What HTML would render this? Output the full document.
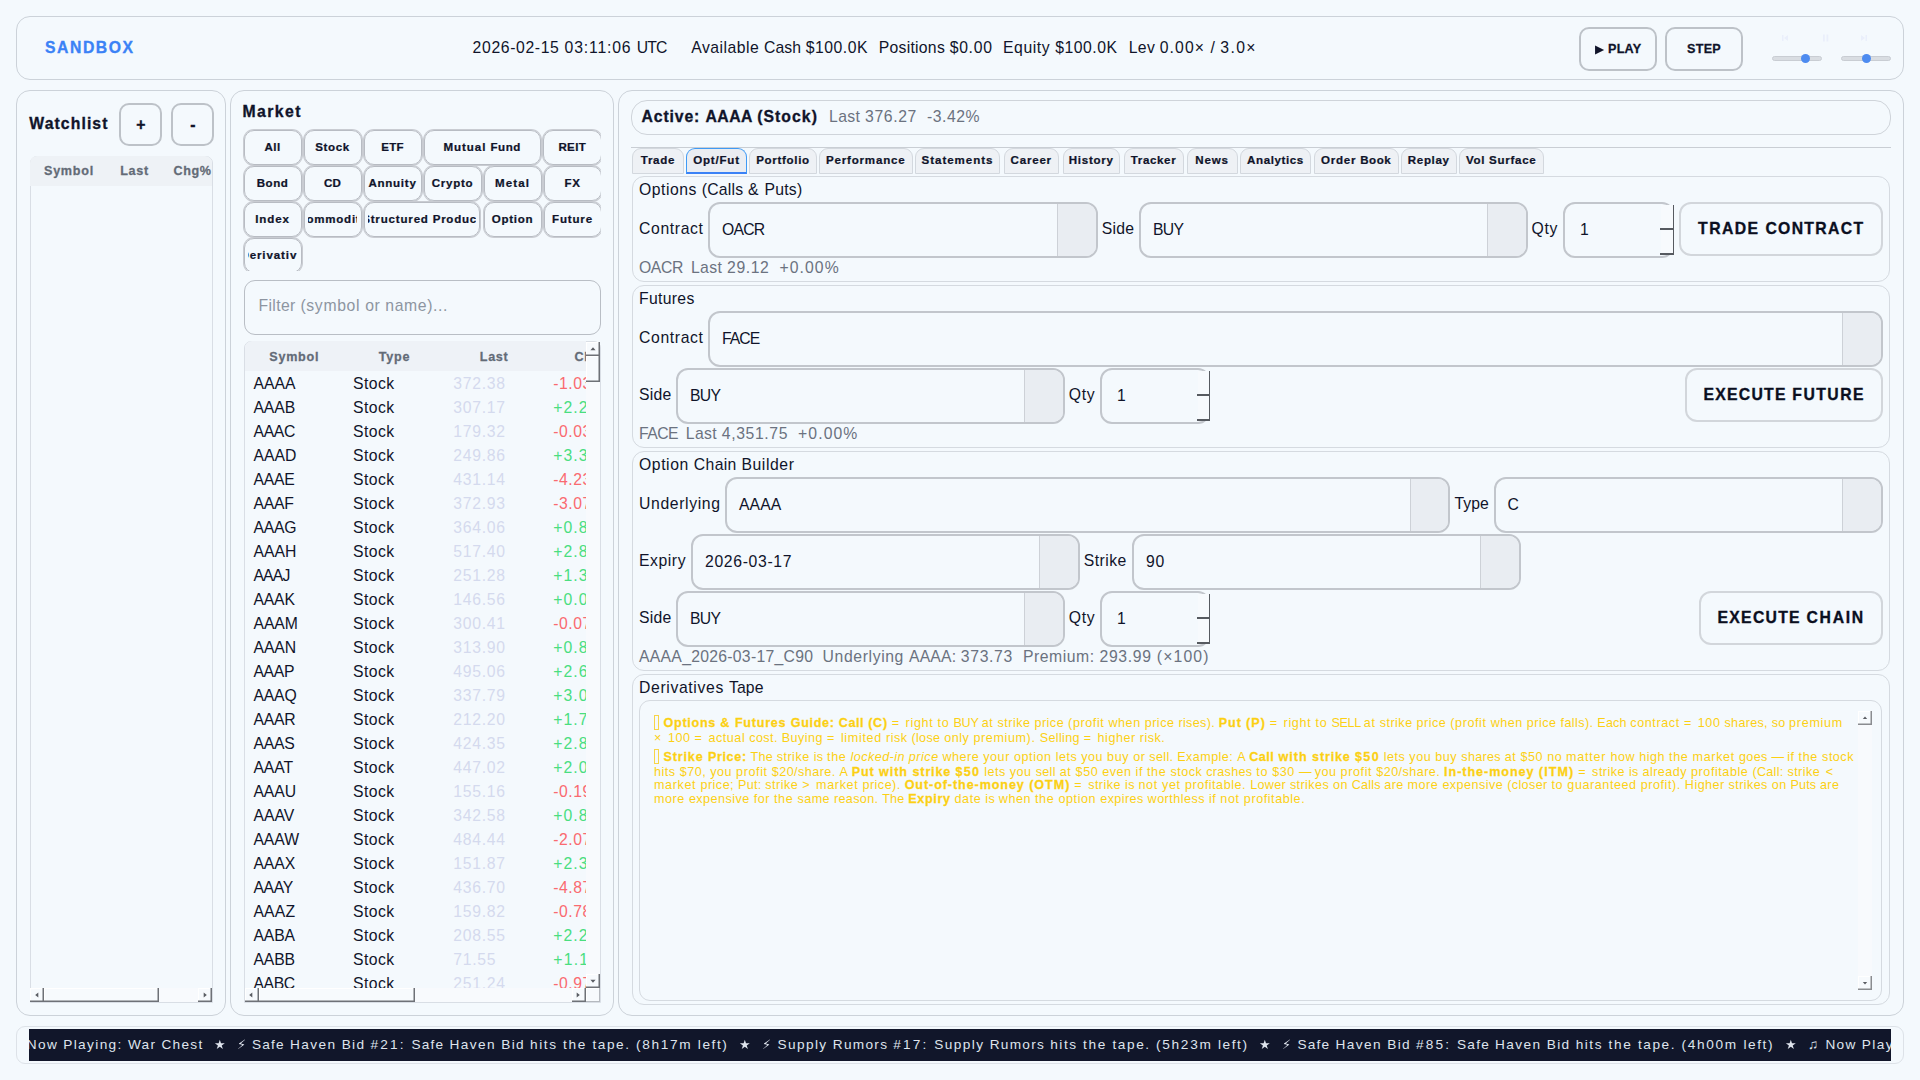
<!DOCTYPE html>
<html><head><meta charset="utf-8"><title>Sandbox</title><style>
html,body{margin:0;padding:0}
body{width:1920px;height:1080px;overflow:hidden;background:#f4f9fd;position:relative;font-family:"Liberation Sans",sans-serif;color:#10142a}
.b{position:absolute;box-sizing:border-box}
.t{position:absolute;white-space:pre;font-size:15px}
</style></head><body>
<div class="b" style="left:16px;top:16px;width:1888px;height:64px;border:1px solid #ccd2d9;border-radius:14px;"></div>
<div class="b" style="left:16px;top:90px;width:210px;height:926px;border:1px solid #ccd2d9;border-radius:14px;"></div>
<div class="b" style="left:230px;top:90px;width:384px;height:926px;border:1px solid #ccd2d9;border-radius:14px;"></div>
<div class="b" style="left:618px;top:90px;width:1286px;height:926px;border:1px solid #ccd2d9;border-radius:14px;"></div>
<div class="b" style="left:16px;top:1026px;width:1888px;height:38px;border:1px solid #dde2e8;border-radius:9px;"></div>
<div class="b" style="left:29px;top:1029px;width:1862px;height:32px;background:#11162a;"></div>
<div class="t" style="left:45px;top:38.3px;line-height:20px;color:#3b82f6;"><span style="font-size:15.75px;font-weight:700;-webkit-text-stroke:0.33px;"><span style="letter-spacing:1.553px">SANDBOX</span></span></div>
<div class="t" style="left:472.6px;top:38.3px;line-height:20px;color:#10142a;"><span style="font-size:15.75px;"><span style="letter-spacing:0.636px">2026-02-15 </span><span style="letter-spacing:0.847px">03:11:06 </span><span style="letter-spacing:-0.878px">UTC</span></span></div>
<div class="t" style="left:691.3px;top:38.3px;line-height:20px;color:#10142a;"><span style="font-size:15.75px;"><span style="letter-spacing:0.466px">Available </span><span style="letter-spacing:0.122px">Cash </span><span style="letter-spacing:0.521px">$100.0K</span></span></div>
<div class="t" style="left:878.7px;top:38.3px;line-height:20px;color:#10142a;"><span style="font-size:15.75px;"><span style="letter-spacing:0.27px">Positions </span><span style="letter-spacing:0.706px">$0.00</span></span></div>
<div class="t" style="left:1003px;top:38.3px;line-height:20px;color:#10142a;"><span style="font-size:15.75px;"><span style="letter-spacing:0.579px">Equity </span><span style="letter-spacing:0.521px">$100.0K</span></span></div>
<div class="t" style="left:1128.8px;top:38.3px;line-height:20px;color:#10142a;"><span style="font-size:15.75px;"><span style="letter-spacing:0.299px">Lev </span><span style="letter-spacing:1.085px">0.00× </span><span style="letter-spacing:0.535px">/ </span><span style="letter-spacing:1.333px">3.0×</span></span></div>
<div class="b" style="left:1579px;top:27px;width:78px;height:43.5px;border:2px solid #bdc2c8;border-radius:10px;"></div>
<div class="t" style="left:1594.66px;top:38.2px;line-height:20px;color:#10142a;"><svg style="display:inline-block;vertical-align:baseline;overflow:visible;margin-right:0px" width="9.23" height="11.13" viewBox="0 -1900 1575 1900"><path fill="currentColor" transform="scale(1,-1)" d="M6 -252V1316L1569 532Z"/></svg><span style="font-size:12.6px;font-weight:700;-webkit-text-stroke:0.26px;"><span style="letter-spacing:0.677px"> </span><span style="letter-spacing:0.205px">PLAY</span></span></div>
<div class="b" style="left:1665px;top:27px;width:78px;height:43.5px;border:2px solid #bdc2c8;border-radius:10px;"></div>
<div class="t" style="left:1687.09px;top:38.2px;line-height:20px;color:#10142a;"><span style="font-size:12.6px;font-weight:700;-webkit-text-stroke:0.26px;"><span style="letter-spacing:0.228px">STEP</span></span></div>
<div class="b" style="left:1772px;top:56px;width:50px;height:5px;border:1px solid #c9cdd3;border-radius:2.5px;background:#d9dde2;"></div>
<div class="b" style="left:1800.5px;top:53.8px;width:9.4px;height:9.4px;border-radius:50%;background:#4d8bf0;"></div>
<div class="b" style="left:1841px;top:56px;width:50px;height:5px;border:1px solid #c9cdd3;border-radius:2.5px;background:#d9dde2;"></div>
<div class="b" style="left:1861.5px;top:53.8px;width:9.4px;height:9.4px;border-radius:50%;background:#4d8bf0;"></div>
<svg class="b" style="left:1775px;top:30px" width="100" height="16"><g fill="#eaeffb"><rect x="7" y="5" width="1.5" height="6"/><polygon points="13,5 13,11 9,8"/><rect x="48" y="4.5" width="1.8" height="7"/><rect x="51.5" y="4.5" width="1.8" height="7"/><polygon points="86,5 86,11 90,8"/><rect x="90.5" y="5" width="1.5" height="6"/></g></svg>
<div class="t" style="left:29.3px;top:114.3px;line-height:20px;color:#10142a;"><span style="font-size:15.75px;font-weight:700;-webkit-text-stroke:0.33px;"><span style="letter-spacing:1.093px">Watchlist</span></span></div>
<div class="b" style="left:118.8px;top:102.8px;width:43.7px;height:43.7px;border:2px solid #bdc2c8;border-radius:10px;"></div>
<div class="t" style="left:134.67px;top:114.5px;line-height:20px;color:#10142a;"><span style="font-size:15.75px;font-weight:700;-webkit-text-stroke:0.33px;"><span style="margin:0 1.685px">+</span></span></div>
<div class="b" style="left:170.8px;top:102.8px;width:43.7px;height:43.7px;border:2px solid #bdc2c8;border-radius:10px;"></div>
<div class="t" style="left:189.84px;top:114.7px;line-height:20px;color:#10142a;"><span style="font-size:15.75px;font-weight:700;-webkit-text-stroke:0.33px;"><span style="margin:0 0.49px">-</span></span></div>
<div class="b" style="left:29.5px;top:155.5px;width:183px;height:847px;border:1px solid #d9dee5;border-radius:7px 7px 0 0;"></div>
<div class="b" style="left:30px;top:156px;width:182px;height:29.5px;border-radius:7px 7px 0 0;background:#eef2f6;"></div>
<div class="t" style="left:44px;top:159.5px;line-height:20px;color:#636b77;"><span style="font-size:12.6px;font-weight:700;-webkit-text-stroke:0.26px;"><span style="letter-spacing:0.735px">Symbol</span></span></div>
<div class="t" style="left:120.2px;top:159.5px;line-height:20px;color:#636b77;"><span style="font-size:12.6px;font-weight:700;-webkit-text-stroke:0.26px;"><span style="letter-spacing:0.679px">Last</span></span></div>
<div class="b" style="left:170px;top:160px;width:42px;height:22px;overflow:hidden;"><div class="b" style="left:-170px;top:-160px;width:1920px;height:1080px;">
<div class="t" style="left:173.5px;top:159.5px;line-height:20px;color:#636b77;"><span style="font-size:12.6px;font-weight:700;-webkit-text-stroke:0.26px;"><span style="letter-spacing:0.567px">Chg%</span></span></div>
</div></div>
<div class="b" style="left:30px;top:988px;width:182px;height:14px;background:#f8fafd;"></div>
<div class="b" style="left:30px;top:988px;width:14px;height:14px;background:#f7fafd;box-shadow:inset -1.5px -1.5px 0 #6e7177, inset 1px 1px 0 #ffffff;"></div>
<svg class="b" style="left:30.5px;top:988.5px" width="12" height="12"><polygon points="7.3,3.4 7.3,8.6 4.2,6" fill="#5a5d63"/></svg>
<div class="b" style="left:44px;top:988px;width:115px;height:14px;background:#f7fafd;box-shadow:inset -1.5px -1.5px 0 #6e7177, inset 1px 1px 0 #ffffff;"></div>
<div class="b" style="left:198px;top:988px;width:14px;height:14px;background:#f7fafd;box-shadow:inset -1.5px -1.5px 0 #6e7177, inset 1px 1px 0 #ffffff;"></div>
<svg class="b" style="left:198.5px;top:988.5px" width="12" height="12"><polygon points="4.7,3.4 4.7,8.6 7.8,6" fill="#5a5d63"/></svg>
<div class="t" style="left:242.5px;top:102px;line-height:20px;color:#10142a;"><span style="font-size:15.75px;font-weight:700;-webkit-text-stroke:0.33px;"><span style="letter-spacing:1.432px">Market</span></span></div>
<div class="b" style="left:240px;top:126px;width:361px;height:144.5px;overflow:hidden;"><div class="b" style="left:-240px;top:-126px;width:1920px;height:1080px;">
<div class="b" style="left:243.5px;top:129.5px;width:58px;height:35px;border:1.5px solid #b8bcc3;border-radius:10px;box-shadow:0 0 0 1px #c9ccd2;"></div>
<div class="t" style="left:264.47px;top:136.3px;line-height:20px;color:#10142a;"><span style="font-size:11.55px;font-weight:700;-webkit-text-stroke:0.24px;"><span style="letter-spacing:0.432px">All</span></span></div>
<div class="b" style="left:303.5px;top:129.5px;width:58px;height:35px;border:1.5px solid #b8bcc3;border-radius:10px;box-shadow:0 0 0 1px #c9ccd2;"></div>
<div class="t" style="left:315.21px;top:136.3px;line-height:20px;color:#10142a;"><span style="font-size:11.55px;font-weight:700;-webkit-text-stroke:0.24px;"><span style="letter-spacing:0.624px">Stock</span></span></div>
<div class="b" style="left:363.5px;top:129.5px;width:58px;height:35px;border:1.5px solid #b8bcc3;border-radius:10px;box-shadow:0 0 0 1px #c9ccd2;"></div>
<div class="t" style="left:381.23px;top:136.3px;line-height:20px;color:#10142a;"><span style="font-size:11.55px;font-weight:700;-webkit-text-stroke:0.24px;"><span style="letter-spacing:0.239px">ETF</span></span></div>
<div class="b" style="left:423.5px;top:129.5px;width:117.5px;height:35px;border:1.5px solid #b8bcc3;border-radius:10px;box-shadow:0 0 0 1px #c9ccd2;"></div>
<div class="t" style="left:443.55px;top:136.3px;line-height:20px;color:#10142a;"><span style="font-size:11.55px;font-weight:700;-webkit-text-stroke:0.24px;"><span style="letter-spacing:0.924px">Mutual </span><span style="letter-spacing:0.57px">Fund</span></span></div>
<div class="b" style="left:543px;top:129.5px;width:58.5px;height:35px;border:1.5px solid #b8bcc3;border-radius:10px;box-shadow:0 0 0 1px #c9ccd2;"></div>
<div class="t" style="left:558.46px;top:136.3px;line-height:20px;color:#10142a;"><span style="font-size:11.55px;font-weight:700;-webkit-text-stroke:0.24px;"><span style="letter-spacing:0.318px">REIT</span></span></div>
<div class="b" style="left:243.5px;top:165.5px;width:58px;height:35px;border:1.5px solid #b8bcc3;border-radius:10px;box-shadow:0 0 0 1px #c9ccd2;"></div>
<div class="t" style="left:256.68px;top:172.3px;line-height:20px;color:#10142a;"><span style="font-size:11.55px;font-weight:700;-webkit-text-stroke:0.24px;"><span style="letter-spacing:0.535px">Bond</span></span></div>
<div class="b" style="left:303.5px;top:165.5px;width:58px;height:35px;border:1.5px solid #b8bcc3;border-radius:10px;box-shadow:0 0 0 1px #c9ccd2;"></div>
<div class="t" style="left:323.9px;top:172.3px;line-height:20px;color:#10142a;"><span style="font-size:11.55px;font-weight:700;-webkit-text-stroke:0.24px;"><span style="letter-spacing:0.261px">CD</span></span></div>
<div class="b" style="left:363.5px;top:165.5px;width:58px;height:35px;border:1.5px solid #b8bcc3;border-radius:10px;box-shadow:0 0 0 1px #c9ccd2;"></div>
<div class="t" style="left:368.4px;top:172.3px;line-height:20px;color:#10142a;"><span style="font-size:11.55px;font-weight:700;-webkit-text-stroke:0.24px;"><span style="letter-spacing:0.746px">Annuity</span></span></div>
<div class="b" style="left:423.5px;top:165.5px;width:58px;height:35px;border:1.5px solid #b8bcc3;border-radius:10px;box-shadow:0 0 0 1px #c9ccd2;"></div>
<div class="t" style="left:431.82px;top:172.3px;line-height:20px;color:#10142a;"><span style="font-size:11.55px;font-weight:700;-webkit-text-stroke:0.24px;"><span style="letter-spacing:0.69px">Crypto</span></span></div>
<div class="b" style="left:483.5px;top:165.5px;width:58px;height:35px;border:1.5px solid #b8bcc3;border-radius:10px;box-shadow:0 0 0 1px #c9ccd2;"></div>
<div class="t" style="left:495.07px;top:172.3px;line-height:20px;color:#10142a;"><span style="font-size:11.55px;font-weight:700;-webkit-text-stroke:0.24px;"><span style="letter-spacing:1.067px">Metal</span></span></div>
<div class="b" style="left:543.5px;top:165.5px;width:58px;height:35px;border:1.5px solid #b8bcc3;border-radius:10px;box-shadow:0 0 0 1px #c9ccd2;"></div>
<div class="t" style="left:564.5px;top:172.3px;line-height:20px;color:#10142a;"><span style="font-size:11.55px;font-weight:700;-webkit-text-stroke:0.24px;"><span style="letter-spacing:0.618px">FX</span></span></div>
<div class="b" style="left:243.5px;top:201.5px;width:58px;height:35px;border:1.5px solid #b8bcc3;border-radius:10px;box-shadow:0 0 0 1px #c9ccd2;"></div>
<div class="t" style="left:255.32px;top:208.3px;line-height:20px;color:#10142a;"><span style="font-size:11.55px;font-weight:700;-webkit-text-stroke:0.24px;"><span style="letter-spacing:0.837px">Index</span></span></div>
<div class="b" style="left:303.5px;top:201.5px;width:58px;height:35px;border:1.5px solid #b8bcc3;border-radius:10px;box-shadow:0 0 0 1px #c9ccd2;"></div>
<div class="b" style="left:307.7px;top:201.5px;width:49.6px;height:35px;overflow:hidden;"><div class="b" style="left:-307.7px;top:-201.5px;width:1920px;height:1080px;">
<div class="t" style="left:297.41px;top:208.3px;line-height:20px;color:#10142a;"><span style="font-size:11.55px;font-weight:700;-webkit-text-stroke:0.24px;"><span style="letter-spacing:0.74px">Commodity</span></span></div>
</div></div>
<div class="b" style="left:363.5px;top:201.5px;width:116.5px;height:35px;border:1.5px solid #b8bcc3;border-radius:10px;box-shadow:0 0 0 1px #c9ccd2;"></div>
<div class="b" style="left:367.7px;top:201.5px;width:108.1px;height:35px;overflow:hidden;"><div class="b" style="left:-367.7px;top:-201.5px;width:1920px;height:1080px;">
<div class="t" style="left:362.17px;top:208.3px;line-height:20px;color:#10142a;"><span style="font-size:11.55px;font-weight:700;-webkit-text-stroke:0.24px;"><span style="letter-spacing:0.821px">Structured </span><span style="letter-spacing:0.699px">Product</span></span></div>
</div></div>
<div class="b" style="left:483.5px;top:201.5px;width:58px;height:35px;border:1.5px solid #b8bcc3;border-radius:10px;box-shadow:0 0 0 1px #c9ccd2;"></div>
<div class="t" style="left:491.68px;top:208.3px;line-height:20px;color:#10142a;"><span style="font-size:11.55px;font-weight:700;-webkit-text-stroke:0.24px;"><span style="letter-spacing:0.74px">Option</span></span></div>
<div class="b" style="left:543.5px;top:201.5px;width:58px;height:35px;border:1.5px solid #b8bcc3;border-radius:10px;box-shadow:0 0 0 1px #c9ccd2;"></div>
<div class="t" style="left:552.11px;top:208.3px;line-height:20px;color:#10142a;"><span style="font-size:11.55px;font-weight:700;-webkit-text-stroke:0.24px;"><span style="letter-spacing:0.807px">Future</span></span></div>
<div class="b" style="left:243.5px;top:237.5px;width:58px;height:35px;border:1.5px solid #b8bcc3;border-radius:10px;box-shadow:0 0 0 1px #c9ccd2;"></div>
<div class="b" style="left:247.7px;top:237.5px;width:49.6px;height:35px;overflow:hidden;"><div class="b" style="left:-247.7px;top:-237.5px;width:1920px;height:1080px;">
<div class="t" style="left:240.48px;top:244.3px;line-height:20px;color:#10142a;"><span style="font-size:11.55px;font-weight:700;-webkit-text-stroke:0.24px;"><span style="letter-spacing:0.882px">Derivative</span></span></div>
</div></div>
</div></div>
<div class="b" style="left:243.5px;top:279.5px;width:357px;height:55px;border:1.5px solid #b9bec5;border-radius:11px;"></div>
<div class="t" style="left:258.5px;top:296.2px;line-height:20px;color:#8d95a1;"><span style="font-size:15.75px;"><span style="letter-spacing:0.363px">Filter </span><span style="letter-spacing:0.66px">(symbol </span><span style="letter-spacing:0.577px">or </span><span style="letter-spacing:0.616px">name)...</span></span></div>
<div class="b" style="left:244px;top:341px;width:357px;height:661.5px;border:1px solid #d9dee5;border-radius:7px 7px 0 0;"></div>
<div class="b" style="left:244.5px;top:341.3px;width:341.3px;height:29.9px;border-radius:7px 0 0 0;background:#eef2f7;"></div>
<div class="t" style="left:269.3px;top:346.3px;line-height:20px;color:#636b77;"><span style="font-size:12.6px;font-weight:700;-webkit-text-stroke:0.26px;"><span style="letter-spacing:0.735px">Symbol</span></span></div>
<div class="t" style="left:378.8px;top:346.3px;line-height:20px;color:#636b77;"><span style="font-size:12.6px;font-weight:700;-webkit-text-stroke:0.26px;"><span style="letter-spacing:0.71px">Type</span></span></div>
<div class="t" style="left:479.8px;top:346.3px;line-height:20px;color:#636b77;"><span style="font-size:12.6px;font-weight:700;-webkit-text-stroke:0.26px;"><span style="letter-spacing:0.679px">Last</span></span></div>
<div class="b" style="left:570px;top:345px;width:15.7px;height:23px;overflow:hidden;"><div class="b" style="left:-570px;top:-345px;width:1920px;height:1080px;">
<div class="t" style="left:574.6px;top:346.3px;line-height:20px;color:#636b77;"><span style="font-size:12.6px;font-weight:700;-webkit-text-stroke:0.26px;"><span style="letter-spacing:0.567px">Chg%</span></span></div>
</div></div>
<div class="b" style="left:245px;top:372px;width:340.7px;height:616px;overflow:hidden;"><div class="b" style="left:-245px;top:-372px;width:1920px;height:1080px;">
<div class="t" style="left:253.4px;top:374.4px;line-height:20px;color:#10142a;"><span style="font-size:15.75px;"><span style="letter-spacing:0.069px">AAAA</span></span></div>
<div class="t" style="left:353.1px;top:374.4px;line-height:20px;color:#10142a;"><span style="font-size:15.75px;"><span style="letter-spacing:0.425px">Stock</span></span></div>
<div class="t" style="left:453.3px;top:374.4px;line-height:20px;color:#d4daee;"><span style="font-size:15.75px;"><span style="letter-spacing:0.719px">372.38</span></span></div>
<div class="t" style="left:553.2px;top:374.4px;line-height:20px;color:#fa6a70;"><span style="font-size:15.75px;"><span style="letter-spacing:0.527px">-1.03%</span></span></div>
<div class="t" style="left:253.4px;top:398.4px;line-height:20px;color:#10142a;"><span style="font-size:15.75px;"><span style="letter-spacing:-0.028px">AAAB</span></span></div>
<div class="t" style="left:353.1px;top:398.4px;line-height:20px;color:#10142a;"><span style="font-size:15.75px;"><span style="letter-spacing:0.425px">Stock</span></span></div>
<div class="t" style="left:453.3px;top:398.4px;line-height:20px;color:#d4daee;"><span style="font-size:15.75px;"><span style="letter-spacing:0.719px">307.17</span></span></div>
<div class="t" style="left:553.2px;top:398.4px;line-height:20px;color:#4ade80;"><span style="font-size:15.75px;"><span style="letter-spacing:1.061px">+2.22%</span></span></div>
<div class="t" style="left:253.4px;top:422.4px;line-height:20px;color:#10142a;"><span style="font-size:15.75px;"><span style="letter-spacing:-0.265px">AAAC</span></span></div>
<div class="t" style="left:353.1px;top:422.4px;line-height:20px;color:#10142a;"><span style="font-size:15.75px;"><span style="letter-spacing:0.425px">Stock</span></span></div>
<div class="t" style="left:453.3px;top:422.4px;line-height:20px;color:#d4daee;"><span style="font-size:15.75px;"><span style="letter-spacing:0.719px">179.32</span></span></div>
<div class="t" style="left:553.2px;top:422.4px;line-height:20px;color:#fa6a70;"><span style="font-size:15.75px;"><span style="letter-spacing:0.527px">-0.03%</span></span></div>
<div class="t" style="left:253.4px;top:446.4px;line-height:20px;color:#10142a;"><span style="font-size:15.75px;"><span style="letter-spacing:0.07px">AAAD</span></span></div>
<div class="t" style="left:353.1px;top:446.4px;line-height:20px;color:#10142a;"><span style="font-size:15.75px;"><span style="letter-spacing:0.425px">Stock</span></span></div>
<div class="t" style="left:453.3px;top:446.4px;line-height:20px;color:#d4daee;"><span style="font-size:15.75px;"><span style="letter-spacing:0.719px">249.86</span></span></div>
<div class="t" style="left:553.2px;top:446.4px;line-height:20px;color:#4ade80;"><span style="font-size:15.75px;"><span style="letter-spacing:1.061px">+3.31%</span></span></div>
<div class="t" style="left:253.4px;top:470.4px;line-height:20px;color:#10142a;"><span style="font-size:15.75px;"><span style="letter-spacing:-0.231px">AAAE</span></span></div>
<div class="t" style="left:353.1px;top:470.4px;line-height:20px;color:#10142a;"><span style="font-size:15.75px;"><span style="letter-spacing:0.425px">Stock</span></span></div>
<div class="t" style="left:453.3px;top:470.4px;line-height:20px;color:#d4daee;"><span style="font-size:15.75px;"><span style="letter-spacing:0.719px">431.14</span></span></div>
<div class="t" style="left:553.2px;top:470.4px;line-height:20px;color:#fa6a70;"><span style="font-size:15.75px;"><span style="letter-spacing:0.527px">-4.23%</span></span></div>
<div class="t" style="left:253.4px;top:494.4px;line-height:20px;color:#10142a;"><span style="font-size:15.75px;"><span style="letter-spacing:-0.223px">AAAF</span></span></div>
<div class="t" style="left:353.1px;top:494.4px;line-height:20px;color:#10142a;"><span style="font-size:15.75px;"><span style="letter-spacing:0.425px">Stock</span></span></div>
<div class="t" style="left:453.3px;top:494.4px;line-height:20px;color:#d4daee;"><span style="font-size:15.75px;"><span style="letter-spacing:0.719px">372.93</span></span></div>
<div class="t" style="left:553.2px;top:494.4px;line-height:20px;color:#fa6a70;"><span style="font-size:15.75px;"><span style="letter-spacing:0.527px">-3.07%</span></span></div>
<div class="t" style="left:253.4px;top:518.4px;line-height:20px;color:#10142a;"><span style="font-size:15.75px;"><span style="letter-spacing:-0.197px">AAAG</span></span></div>
<div class="t" style="left:353.1px;top:518.4px;line-height:20px;color:#10142a;"><span style="font-size:15.75px;"><span style="letter-spacing:0.425px">Stock</span></span></div>
<div class="t" style="left:453.3px;top:518.4px;line-height:20px;color:#d4daee;"><span style="font-size:15.75px;"><span style="letter-spacing:0.719px">364.06</span></span></div>
<div class="t" style="left:553.2px;top:518.4px;line-height:20px;color:#4ade80;"><span style="font-size:15.75px;"><span style="letter-spacing:1.061px">+0.85%</span></span></div>
<div class="t" style="left:253.4px;top:542.4px;line-height:20px;color:#10142a;"><span style="font-size:15.75px;">AAAH</span></div>
<div class="t" style="left:353.1px;top:542.4px;line-height:20px;color:#10142a;"><span style="font-size:15.75px;"><span style="letter-spacing:0.425px">Stock</span></span></div>
<div class="t" style="left:453.3px;top:542.4px;line-height:20px;color:#d4daee;"><span style="font-size:15.75px;"><span style="letter-spacing:0.719px">517.40</span></span></div>
<div class="t" style="left:553.2px;top:542.4px;line-height:20px;color:#4ade80;"><span style="font-size:15.75px;"><span style="letter-spacing:1.061px">+2.86%</span></span></div>
<div class="t" style="left:253.4px;top:566.4px;line-height:20px;color:#10142a;"><span style="font-size:15.75px;"><span style="letter-spacing:-0.837px">AAAJ</span></span></div>
<div class="t" style="left:353.1px;top:566.4px;line-height:20px;color:#10142a;"><span style="font-size:15.75px;"><span style="letter-spacing:0.425px">Stock</span></span></div>
<div class="t" style="left:453.3px;top:566.4px;line-height:20px;color:#d4daee;"><span style="font-size:15.75px;"><span style="letter-spacing:0.719px">251.28</span></span></div>
<div class="t" style="left:553.2px;top:566.4px;line-height:20px;color:#4ade80;"><span style="font-size:15.75px;"><span style="letter-spacing:1.061px">+1.34%</span></span></div>
<div class="t" style="left:253.4px;top:590.4px;line-height:20px;color:#10142a;"><span style="font-size:15.75px;"><span style="letter-spacing:-0.142px">AAAK</span></span></div>
<div class="t" style="left:353.1px;top:590.4px;line-height:20px;color:#10142a;"><span style="font-size:15.75px;"><span style="letter-spacing:0.425px">Stock</span></span></div>
<div class="t" style="left:453.3px;top:590.4px;line-height:20px;color:#d4daee;"><span style="font-size:15.75px;"><span style="letter-spacing:0.719px">146.56</span></span></div>
<div class="t" style="left:553.2px;top:590.4px;line-height:20px;color:#4ade80;"><span style="font-size:15.75px;"><span style="letter-spacing:1.061px">+0.06%</span></span></div>
<div class="t" style="left:253.4px;top:614.4px;line-height:20px;color:#10142a;"><span style="font-size:15.75px;"><span style="letter-spacing:-0.019px">AAAM</span></span></div>
<div class="t" style="left:353.1px;top:614.4px;line-height:20px;color:#10142a;"><span style="font-size:15.75px;"><span style="letter-spacing:0.425px">Stock</span></span></div>
<div class="t" style="left:453.3px;top:614.4px;line-height:20px;color:#d4daee;"><span style="font-size:15.75px;"><span style="letter-spacing:0.719px">300.41</span></span></div>
<div class="t" style="left:553.2px;top:614.4px;line-height:20px;color:#fa6a70;"><span style="font-size:15.75px;"><span style="letter-spacing:0.527px">-0.07%</span></span></div>
<div class="t" style="left:253.4px;top:638.4px;line-height:20px;color:#10142a;"><span style="font-size:15.75px;"><span style="letter-spacing:-0.013px">AAAN</span></span></div>
<div class="t" style="left:353.1px;top:638.4px;line-height:20px;color:#10142a;"><span style="font-size:15.75px;"><span style="letter-spacing:0.425px">Stock</span></span></div>
<div class="t" style="left:453.3px;top:638.4px;line-height:20px;color:#d4daee;"><span style="font-size:15.75px;"><span style="letter-spacing:0.719px">313.90</span></span></div>
<div class="t" style="left:553.2px;top:638.4px;line-height:20px;color:#4ade80;"><span style="font-size:15.75px;"><span style="letter-spacing:1.061px">+0.84%</span></span></div>
<div class="t" style="left:253.4px;top:662.4px;line-height:20px;color:#10142a;"><span style="font-size:15.75px;"><span style="letter-spacing:-0.339px">AAAP</span></span></div>
<div class="t" style="left:353.1px;top:662.4px;line-height:20px;color:#10142a;"><span style="font-size:15.75px;"><span style="letter-spacing:0.425px">Stock</span></span></div>
<div class="t" style="left:453.3px;top:662.4px;line-height:20px;color:#d4daee;"><span style="font-size:15.75px;"><span style="letter-spacing:0.719px">495.06</span></span></div>
<div class="t" style="left:553.2px;top:662.4px;line-height:20px;color:#4ade80;"><span style="font-size:15.75px;"><span style="letter-spacing:1.061px">+2.61%</span></span></div>
<div class="t" style="left:253.4px;top:686.4px;line-height:20px;color:#10142a;"><span style="font-size:15.75px;"><span style="letter-spacing:-0.151px">AAAQ</span></span></div>
<div class="t" style="left:353.1px;top:686.4px;line-height:20px;color:#10142a;"><span style="font-size:15.75px;"><span style="letter-spacing:0.425px">Stock</span></span></div>
<div class="t" style="left:453.3px;top:686.4px;line-height:20px;color:#d4daee;"><span style="font-size:15.75px;"><span style="letter-spacing:0.719px">337.79</span></span></div>
<div class="t" style="left:553.2px;top:686.4px;line-height:20px;color:#4ade80;"><span style="font-size:15.75px;"><span style="letter-spacing:1.061px">+3.02%</span></span></div>
<div class="t" style="left:253.4px;top:710.4px;line-height:20px;color:#10142a;"><span style="font-size:15.75px;"><span style="letter-spacing:-0.212px">AAAR</span></span></div>
<div class="t" style="left:353.1px;top:710.4px;line-height:20px;color:#10142a;"><span style="font-size:15.75px;"><span style="letter-spacing:0.425px">Stock</span></span></div>
<div class="t" style="left:453.3px;top:710.4px;line-height:20px;color:#d4daee;"><span style="font-size:15.75px;"><span style="letter-spacing:0.719px">212.20</span></span></div>
<div class="t" style="left:553.2px;top:710.4px;line-height:20px;color:#4ade80;"><span style="font-size:15.75px;"><span style="letter-spacing:1.061px">+1.74%</span></span></div>
<div class="t" style="left:253.4px;top:734.4px;line-height:20px;color:#10142a;"><span style="font-size:15.75px;"><span style="letter-spacing:-0.22px">AAAS</span></span></div>
<div class="t" style="left:353.1px;top:734.4px;line-height:20px;color:#10142a;"><span style="font-size:15.75px;"><span style="letter-spacing:0.425px">Stock</span></span></div>
<div class="t" style="left:453.3px;top:734.4px;line-height:20px;color:#d4daee;"><span style="font-size:15.75px;"><span style="letter-spacing:0.719px">424.35</span></span></div>
<div class="t" style="left:553.2px;top:734.4px;line-height:20px;color:#4ade80;"><span style="font-size:15.75px;"><span style="letter-spacing:1.061px">+2.86%</span></span></div>
<div class="t" style="left:253.4px;top:758.4px;line-height:20px;color:#10142a;"><span style="font-size:15.75px;"><span style="letter-spacing:-0.088px">AAAT</span></span></div>
<div class="t" style="left:353.1px;top:758.4px;line-height:20px;color:#10142a;"><span style="font-size:15.75px;"><span style="letter-spacing:0.425px">Stock</span></span></div>
<div class="t" style="left:453.3px;top:758.4px;line-height:20px;color:#d4daee;"><span style="font-size:15.75px;"><span style="letter-spacing:0.719px">447.02</span></span></div>
<div class="t" style="left:553.2px;top:758.4px;line-height:20px;color:#4ade80;"><span style="font-size:15.75px;"><span style="letter-spacing:1.061px">+2.05%</span></span></div>
<div class="t" style="left:253.4px;top:782.4px;line-height:20px;color:#10142a;"><span style="font-size:15.75px;"><span style="letter-spacing:-0.073px">AAAU</span></span></div>
<div class="t" style="left:353.1px;top:782.4px;line-height:20px;color:#10142a;"><span style="font-size:15.75px;"><span style="letter-spacing:0.425px">Stock</span></span></div>
<div class="t" style="left:453.3px;top:782.4px;line-height:20px;color:#d4daee;"><span style="font-size:15.75px;"><span style="letter-spacing:0.719px">155.16</span></span></div>
<div class="t" style="left:553.2px;top:782.4px;line-height:20px;color:#fa6a70;"><span style="font-size:15.75px;"><span style="letter-spacing:0.527px">-0.19%</span></span></div>
<div class="t" style="left:253.4px;top:806.4px;line-height:20px;color:#10142a;"><span style="font-size:15.75px;"><span style="letter-spacing:0.017px">AAAV</span></span></div>
<div class="t" style="left:353.1px;top:806.4px;line-height:20px;color:#10142a;"><span style="font-size:15.75px;"><span style="letter-spacing:0.425px">Stock</span></span></div>
<div class="t" style="left:453.3px;top:806.4px;line-height:20px;color:#d4daee;"><span style="font-size:15.75px;"><span style="letter-spacing:0.719px">342.58</span></span></div>
<div class="t" style="left:553.2px;top:806.4px;line-height:20px;color:#4ade80;"><span style="font-size:15.75px;"><span style="letter-spacing:1.061px">+0.83%</span></span></div>
<div class="t" style="left:253.4px;top:830.4px;line-height:20px;color:#10142a;"><span style="font-size:15.75px;"><span style="letter-spacing:-0.042px">AAAW</span></span></div>
<div class="t" style="left:353.1px;top:830.4px;line-height:20px;color:#10142a;"><span style="font-size:15.75px;"><span style="letter-spacing:0.425px">Stock</span></span></div>
<div class="t" style="left:453.3px;top:830.4px;line-height:20px;color:#d4daee;"><span style="font-size:15.75px;"><span style="letter-spacing:0.719px">484.44</span></span></div>
<div class="t" style="left:553.2px;top:830.4px;line-height:20px;color:#fa6a70;"><span style="font-size:15.75px;"><span style="letter-spacing:0.527px">-2.07%</span></span></div>
<div class="t" style="left:253.4px;top:854.4px;line-height:20px;color:#10142a;"><span style="font-size:15.75px;"><span style="letter-spacing:-0.032px">AAAX</span></span></div>
<div class="t" style="left:353.1px;top:854.4px;line-height:20px;color:#10142a;"><span style="font-size:15.75px;"><span style="letter-spacing:0.425px">Stock</span></span></div>
<div class="t" style="left:453.3px;top:854.4px;line-height:20px;color:#d4daee;"><span style="font-size:15.75px;"><span style="letter-spacing:0.719px">151.87</span></span></div>
<div class="t" style="left:553.2px;top:854.4px;line-height:20px;color:#4ade80;"><span style="font-size:15.75px;"><span style="letter-spacing:1.061px">+2.35%</span></span></div>
<div class="t" style="left:253.4px;top:878.4px;line-height:20px;color:#10142a;"><span style="font-size:15.75px;"><span style="letter-spacing:-0.309px">AAAY</span></span></div>
<div class="t" style="left:353.1px;top:878.4px;line-height:20px;color:#10142a;"><span style="font-size:15.75px;"><span style="letter-spacing:0.425px">Stock</span></span></div>
<div class="t" style="left:453.3px;top:878.4px;line-height:20px;color:#d4daee;"><span style="font-size:15.75px;"><span style="letter-spacing:0.719px">436.70</span></span></div>
<div class="t" style="left:553.2px;top:878.4px;line-height:20px;color:#fa6a70;"><span style="font-size:15.75px;"><span style="letter-spacing:0.527px">-4.87%</span></span></div>
<div class="t" style="left:253.4px;top:902.4px;line-height:20px;color:#10142a;"><span style="font-size:15.75px;"><span style="letter-spacing:0.189px">AAAZ</span></span></div>
<div class="t" style="left:353.1px;top:902.4px;line-height:20px;color:#10142a;"><span style="font-size:15.75px;"><span style="letter-spacing:0.425px">Stock</span></span></div>
<div class="t" style="left:453.3px;top:902.4px;line-height:20px;color:#d4daee;"><span style="font-size:15.75px;"><span style="letter-spacing:0.719px">159.82</span></span></div>
<div class="t" style="left:553.2px;top:902.4px;line-height:20px;color:#fa6a70;"><span style="font-size:15.75px;"><span style="letter-spacing:0.527px">-0.78%</span></span></div>
<div class="t" style="left:253.4px;top:926.4px;line-height:20px;color:#10142a;"><span style="font-size:15.75px;"><span style="letter-spacing:-0.132px">AABA</span></span></div>
<div class="t" style="left:353.1px;top:926.4px;line-height:20px;color:#10142a;"><span style="font-size:15.75px;"><span style="letter-spacing:0.425px">Stock</span></span></div>
<div class="t" style="left:453.3px;top:926.4px;line-height:20px;color:#d4daee;"><span style="font-size:15.75px;"><span style="letter-spacing:0.719px">208.55</span></span></div>
<div class="t" style="left:553.2px;top:926.4px;line-height:20px;color:#4ade80;"><span style="font-size:15.75px;"><span style="letter-spacing:1.061px">+2.24%</span></span></div>
<div class="t" style="left:253.4px;top:950.4px;line-height:20px;color:#10142a;"><span style="font-size:15.75px;"><span style="letter-spacing:-0.125px">AABB</span></span></div>
<div class="t" style="left:353.1px;top:950.4px;line-height:20px;color:#10142a;"><span style="font-size:15.75px;"><span style="letter-spacing:0.425px">Stock</span></span></div>
<div class="t" style="left:453.3px;top:950.4px;line-height:20px;color:#d4daee;"><span style="font-size:15.75px;"><span style="letter-spacing:0.706px">71.55</span></span></div>
<div class="t" style="left:553.2px;top:950.4px;line-height:20px;color:#4ade80;"><span style="font-size:15.75px;"><span style="letter-spacing:1.255px">+1.11%</span></span></div>
<div class="t" style="left:253.4px;top:974.4px;line-height:20px;color:#10142a;"><span style="font-size:15.75px;"><span style="letter-spacing:-0.362px">AABC</span></span></div>
<div class="t" style="left:353.1px;top:974.4px;line-height:20px;color:#10142a;"><span style="font-size:15.75px;"><span style="letter-spacing:0.425px">Stock</span></span></div>
<div class="t" style="left:453.3px;top:974.4px;line-height:20px;color:#d4daee;"><span style="font-size:15.75px;"><span style="letter-spacing:0.719px">251.24</span></span></div>
<div class="t" style="left:553.2px;top:974.4px;line-height:20px;color:#fa6a70;"><span style="font-size:15.75px;"><span style="letter-spacing:0.527px">-0.97%</span></span></div>
</div></div>
<div class="b" style="left:585.8px;top:342px;width:14px;height:646px;background:#f8fafd;"></div>
<div class="b" style="left:585.8px;top:342px;width:14px;height:14px;background:#f7fafd;box-shadow:inset -1.5px -1.5px 0 #6e7177, inset 1px 1px 0 #ffffff;"></div>
<svg class="b" style="left:586.5px;top:343.2px" width="12" height="12"><polygon points="3.4,7.3 8.6,7.3 6,4.2" fill="#5a5d63"/></svg>
<div class="b" style="left:585.8px;top:356px;width:14px;height:25.6px;background:#f7fafd;box-shadow:inset -1.5px -1.5px 0 #6e7177, inset 1px 1px 0 #ffffff;"></div>
<div class="b" style="left:585.8px;top:974px;width:14px;height:14px;background:#f7fafd;box-shadow:inset -1.5px -1.5px 0 #6e7177, inset 1px 1px 0 #ffffff;"></div>
<svg class="b" style="left:586.5px;top:975px" width="12" height="12"><polygon points="3.4,4.7 8.6,4.7 6,7.8" fill="#5a5d63"/></svg>
<div class="b" style="left:244.5px;top:988px;width:341.3px;height:14px;background:#f8fafd;"></div>
<div class="b" style="left:244.5px;top:988px;width:14px;height:14px;background:#f7fafd;box-shadow:inset -1.5px -1.5px 0 #6e7177, inset 1px 1px 0 #ffffff;"></div>
<svg class="b" style="left:245px;top:988.5px" width="12" height="12"><polygon points="7.3,3.4 7.3,8.6 4.2,6" fill="#5a5d63"/></svg>
<div class="b" style="left:258.5px;top:988px;width:156px;height:14px;background:#f7fafd;box-shadow:inset -1.5px -1.5px 0 #6e7177, inset 1px 1px 0 #ffffff;"></div>
<div class="b" style="left:571.8px;top:988px;width:14px;height:14px;background:#f7fafd;box-shadow:inset -1.5px -1.5px 0 #6e7177, inset 1px 1px 0 #ffffff;"></div>
<svg class="b" style="left:572.3px;top:988.5px" width="12" height="12"><polygon points="4.7,3.4 4.7,8.6 7.8,6" fill="#5a5d63"/></svg>
<div class="b" style="left:585.8px;top:988px;width:14px;height:14px;background:#f7fafd;box-shadow:inset -1px -1px 0 #b5b9bf, inset 1px 1px 0 #ffffff;"></div>
<div class="b" style="left:631px;top:99.5px;width:1260px;height:35px;border:1px solid #cfd4da;border-radius:16px;"></div>
<div class="t" style="left:641.5px;top:106.8px;line-height:20px;color:#10142a;"><span style="font-size:15.75px;font-weight:700;-webkit-text-stroke:0.33px;"><span style="letter-spacing:0.886px">Active: </span><span style="letter-spacing:0.474px">AAAA </span><span style="letter-spacing:1.068px">(Stock)</span></span></div>
<div class="t" style="left:829px;top:106.8px;line-height:20px;color:#6b7280;"><span style="font-size:15.75px;"><span style="letter-spacing:0.374px">Last </span><span style="letter-spacing:0.637px">376.27  </span><span style="letter-spacing:0.527px">-3.42%</span></span></div>
<div class="b" style="left:631px;top:146.8px;width:1260px;height:1px;background:#c9ced4;"></div>
<div class="b" style="left:632px;top:147.5px;width:52px;height:26px;border:1px solid #d3d8de;border-radius:9px 9px 0 0;background:#eef1f5;"></div>
<div class="t" style="left:640.76px;top:149.2px;line-height:20px;color:#10142a;"><span style="font-size:11.55px;font-weight:700;-webkit-text-stroke:0.24px;"><span style="letter-spacing:0.732px">Trade</span></span></div>
<div class="b" style="left:686px;top:147.5px;width:61px;height:26.5px;border:1.5px solid #3f9af5;border-radius:9px 9px 0 0;background:#eaedf2;border-bottom:2.5px solid #3b82f6;"></div>
<div class="t" style="left:693.22px;top:149.2px;line-height:20px;color:#10142a;"><span style="font-size:11.55px;font-weight:700;-webkit-text-stroke:0.24px;"><span style="letter-spacing:0.787px">Opt/Fut</span></span></div>
<div class="b" style="left:749px;top:147.5px;width:68px;height:26px;border:1px solid #d3d8de;border-radius:9px 9px 0 0;background:#eef1f5;"></div>
<div class="t" style="left:756.13px;top:149.2px;line-height:20px;color:#10142a;"><span style="font-size:11.55px;font-weight:700;-webkit-text-stroke:0.24px;"><span style="letter-spacing:0.697px">Portfolio</span></span></div>
<div class="b" style="left:819px;top:147.5px;width:93.5px;height:26px;border:1px solid #d3d8de;border-radius:9px 9px 0 0;background:#eef1f5;"></div>
<div class="t" style="left:826.04px;top:149.2px;line-height:20px;color:#10142a;"><span style="font-size:11.55px;font-weight:700;-webkit-text-stroke:0.24px;"><span style="letter-spacing:0.8px">Performance</span></span></div>
<div class="b" style="left:915px;top:147.5px;width:85px;height:26px;border:1px solid #d3d8de;border-radius:9px 9px 0 0;background:#eef1f5;"></div>
<div class="t" style="left:921.56px;top:149.2px;line-height:20px;color:#10142a;"><span style="font-size:11.55px;font-weight:700;-webkit-text-stroke:0.24px;"><span style="letter-spacing:0.962px">Statements</span></span></div>
<div class="b" style="left:1003.5px;top:147.5px;width:55.5px;height:26px;border:1px solid #d3d8de;border-radius:9px 9px 0 0;background:#eef1f5;"></div>
<div class="t" style="left:1010.62px;top:149.2px;line-height:20px;color:#10142a;"><span style="font-size:11.55px;font-weight:700;-webkit-text-stroke:0.24px;"><span style="letter-spacing:0.777px">Career</span></span></div>
<div class="b" style="left:1062.5px;top:147.5px;width:57.5px;height:26px;border:1px solid #d3d8de;border-radius:9px 9px 0 0;background:#eef1f5;"></div>
<div class="t" style="left:1068.78px;top:149.2px;line-height:20px;color:#10142a;"><span style="font-size:11.55px;font-weight:700;-webkit-text-stroke:0.24px;"><span style="letter-spacing:0.734px">History</span></span></div>
<div class="b" style="left:1123.5px;top:147.5px;width:60px;height:26px;border:1px solid #d3d8de;border-radius:9px 9px 0 0;background:#eef1f5;"></div>
<div class="t" style="left:1130.72px;top:149.2px;line-height:20px;color:#10142a;"><span style="font-size:11.55px;font-weight:700;-webkit-text-stroke:0.24px;"><span style="letter-spacing:0.638px">Tracker</span></span></div>
<div class="b" style="left:1186.5px;top:147.5px;width:51px;height:26px;border:1px solid #d3d8de;border-radius:9px 9px 0 0;background:#eef1f5;"></div>
<div class="t" style="left:1195.31px;top:149.2px;line-height:20px;color:#10142a;"><span style="font-size:11.55px;font-weight:700;-webkit-text-stroke:0.24px;"><span style="letter-spacing:0.801px">News</span></span></div>
<div class="b" style="left:1240px;top:147.5px;width:71px;height:26px;border:1px solid #d3d8de;border-radius:9px 9px 0 0;background:#eef1f5;"></div>
<div class="t" style="left:1247.1px;top:149.2px;line-height:20px;color:#10142a;"><span style="font-size:11.55px;font-weight:700;-webkit-text-stroke:0.24px;"><span style="letter-spacing:0.606px">Analytics</span></span></div>
<div class="b" style="left:1313.5px;top:147.5px;width:85px;height:26px;border:1px solid #d3d8de;border-radius:9px 9px 0 0;background:#eef1f5;"></div>
<div class="t" style="left:1320.91px;top:149.2px;line-height:20px;color:#10142a;"><span style="font-size:11.55px;font-weight:700;-webkit-text-stroke:0.24px;"><span style="letter-spacing:0.784px">Order </span><span style="letter-spacing:0.485px">Book</span></span></div>
<div class="b" style="left:1401px;top:147.5px;width:55.5px;height:26px;border:1px solid #d3d8de;border-radius:9px 9px 0 0;background:#eef1f5;"></div>
<div class="t" style="left:1407.83px;top:149.2px;line-height:20px;color:#10142a;"><span style="font-size:11.55px;font-weight:700;-webkit-text-stroke:0.24px;"><span style="letter-spacing:0.659px">Replay</span></span></div>
<div class="b" style="left:1459px;top:147.5px;width:84.5px;height:26px;border:1px solid #d3d8de;border-radius:9px 9px 0 0;background:#eef1f5;"></div>
<div class="t" style="left:1466.03px;top:149.2px;line-height:20px;color:#10142a;"><span style="font-size:11.55px;font-weight:700;-webkit-text-stroke:0.24px;"><span style="letter-spacing:0.687px">Vol </span><span style="letter-spacing:0.714px">Surface</span></span></div>
<div class="b" style="left:632.3px;top:176.1px;width:1257.4px;height:105.9px;border:1px solid #d5dae0;border-radius:12px;"></div>
<div class="t" style="left:639px;top:180px;line-height:20px;color:#10142a;"><span style="font-size:15.75px;"><span style="letter-spacing:0.499px">Options </span><span style="letter-spacing:0.258px">(Calls </span><span style="letter-spacing:0.792px">&amp; </span><span style="letter-spacing:0.215px">Puts)</span></span></div>
<div class="t" style="left:639px;top:218.7px;line-height:20px;color:#10142a;"><span style="font-size:15.75px;"><span style="letter-spacing:0.625px">Contract</span></span></div>
<div class="b" style="left:707.9px;top:201.9px;width:389.9px;height:56.3px;border:2px solid #c2c6cc;border-radius:12px;overflow:hidden;"><div class="b" style="right:0;top:0;width:38.5px;height:100%;background:#e9edf2;border-left:1px solid #cdd1d7"></div></div>
<div class="t" style="left:722px;top:219.8px;line-height:20px;color:#10142a;"><span style="font-size:15.75px;"><span style="letter-spacing:-0.767px">OACR</span></span></div>
<div class="t" style="left:1101.8px;top:218.7px;line-height:20px;color:#10142a;"><span style="font-size:15.75px;"><span style="letter-spacing:0.229px">Side</span></span></div>
<div class="b" style="left:1138.9px;top:201.9px;width:388.9px;height:56.3px;border:2px solid #c2c6cc;border-radius:12px;overflow:hidden;"><div class="b" style="right:0;top:0;width:38.5px;height:100%;background:#e9edf2;border-left:1px solid #cdd1d7"></div></div>
<div class="t" style="left:1153px;top:219.8px;line-height:20px;color:#10142a;"><span style="font-size:15.75px;"><span style="letter-spacing:-0.651px">BUY</span></span></div>
<div class="t" style="left:1531.5px;top:218.7px;line-height:20px;color:#10142a;"><span style="font-size:15.75px;"><span style="letter-spacing:0.688px">Qty</span></span></div>
<div class="b" style="left:1562.9px;top:201.9px;width:110.9px;height:56.3px;border:2px solid #c2c6cc;border-radius:12px;"></div>
<div class="t" style="left:1579.5px;top:219.8px;line-height:20px;color:#10142a;"><span style="font-size:15.75px;"><span style="margin:0 0.392px">1</span></span></div>
<div class="b" style="left:1661px;top:205px;width:11.5px;height:49.5px;background:#f7fafd;"></div>
<div class="b" style="left:1672.6px;top:204.7px;width:1.4px;height:49.9px;background:#565a60;"></div>
<div class="b" style="left:1660.1px;top:228.3px;width:13.4px;height:1.4px;background:#565a60;"></div>
<div class="b" style="left:1660.1px;top:253.2px;width:13.4px;height:1.4px;background:#565a60;"></div>
<div class="b" style="left:1678.9px;top:202px;width:203.9px;height:54.2px;border:2px solid #d2d6db;border-radius:12px;"></div>
<div class="t" style="left:1698.07px;top:219.1px;line-height:20px;color:#0b0f1f;"><span style="font-size:15.75px;font-weight:700;-webkit-text-stroke:0.33px;"><span style="letter-spacing:1.448px">TRADE </span><span style="letter-spacing:1.323px">CONTRACT</span></span></div>
<div class="t" style="left:639px;top:258.3px;line-height:20px;color:#6b7280;"><span style="font-size:15.75px;"><span style="letter-spacing:-0.381px">OACR  </span><span style="letter-spacing:0.374px">Last </span><span style="letter-spacing:0.616px">29.12  </span><span style="letter-spacing:1.061px">+0.00%</span></span></div>
<div class="b" style="left:632.3px;top:285.1px;width:1257.4px;height:162.8px;border:1px solid #d5dae0;border-radius:12px;"></div>
<div class="t" style="left:639px;top:288.6px;line-height:20px;color:#10142a;"><span style="font-size:15.75px;"><span style="letter-spacing:0.313px">Futures</span></span></div>
<div class="t" style="left:639px;top:327.7px;line-height:20px;color:#10142a;"><span style="font-size:15.75px;"><span style="letter-spacing:0.625px">Contract</span></span></div>
<div class="b" style="left:707.9px;top:310.9px;width:1174.9px;height:56.3px;border:2px solid #c2c6cc;border-radius:12px;overflow:hidden;"><div class="b" style="right:0;top:0;width:38.5px;height:100%;background:#e9edf2;border-left:1px solid #cdd1d7"></div></div>
<div class="t" style="left:722px;top:328.8px;line-height:20px;color:#10142a;"><span style="font-size:15.75px;"><span style="letter-spacing:-0.984px">FACE</span></span></div>
<div class="t" style="left:639px;top:384.9px;line-height:20px;color:#10142a;"><span style="font-size:15.75px;"><span style="letter-spacing:0.229px">Side</span></span></div>
<div class="b" style="left:675.9px;top:367.9px;width:388.9px;height:56.3px;border:2px solid #c2c6cc;border-radius:12px;overflow:hidden;"><div class="b" style="right:0;top:0;width:38.5px;height:100%;background:#e9edf2;border-left:1px solid #cdd1d7"></div></div>
<div class="t" style="left:690px;top:385.8px;line-height:20px;color:#10142a;"><span style="font-size:15.75px;"><span style="letter-spacing:-0.651px">BUY</span></span></div>
<div class="t" style="left:1068.7px;top:384.9px;line-height:20px;color:#10142a;"><span style="font-size:15.75px;"><span style="letter-spacing:0.688px">Qty</span></span></div>
<div class="b" style="left:1099.9px;top:367.9px;width:110.4px;height:56.3px;border:2px solid #c2c6cc;border-radius:12px;"></div>
<div class="t" style="left:1116.5px;top:385.8px;line-height:20px;color:#10142a;"><span style="font-size:15.75px;"><span style="margin:0 0.392px">1</span></span></div>
<div class="b" style="left:1197.5px;top:371px;width:11.5px;height:49.5px;background:#f7fafd;"></div>
<div class="b" style="left:1209.1px;top:370.7px;width:1.4px;height:49.9px;background:#565a60;"></div>
<div class="b" style="left:1196.6px;top:394.3px;width:13.4px;height:1.4px;background:#565a60;"></div>
<div class="b" style="left:1196.6px;top:419.2px;width:13.4px;height:1.4px;background:#565a60;"></div>
<div class="b" style="left:1684.9px;top:368px;width:197.9px;height:54.2px;border:2px solid #d2d6db;border-radius:12px;"></div>
<div class="t" style="left:1703.41px;top:385.1px;line-height:20px;color:#0b0f1f;"><span style="font-size:15.75px;font-weight:700;-webkit-text-stroke:0.33px;"><span style="letter-spacing:1.273px">EXECUTE </span><span style="letter-spacing:1.461px">FUTURE</span></span></div>
<div class="t" style="left:639px;top:424.3px;line-height:20px;color:#6b7280;"><span style="font-size:15.75px;"><span style="letter-spacing:-0.525px">FACE  </span><span style="letter-spacing:0.374px">Last </span><span style="letter-spacing:0.627px">4,351.75  </span><span style="letter-spacing:1.061px">+0.00%</span></span></div>
<div class="b" style="left:632.3px;top:451.2px;width:1257.4px;height:219.5px;border:1px solid #d5dae0;border-radius:12px;"></div>
<div class="t" style="left:639px;top:454.6px;line-height:20px;color:#10142a;"><span style="font-size:15.75px;"><span style="letter-spacing:0.578px">Option </span><span style="letter-spacing:0.348px">Chain </span><span style="letter-spacing:0.575px">Builder</span></span></div>
<div class="t" style="left:639px;top:493.7px;line-height:20px;color:#10142a;"><span style="font-size:15.75px;"><span style="letter-spacing:0.635px">Underlying</span></span></div>
<div class="b" style="left:724.9px;top:476.9px;width:725.4px;height:56.3px;border:2px solid #c2c6cc;border-radius:12px;overflow:hidden;"><div class="b" style="right:0;top:0;width:38.5px;height:100%;background:#e9edf2;border-left:1px solid #cdd1d7"></div></div>
<div class="t" style="left:739px;top:494.8px;line-height:20px;color:#10142a;"><span style="font-size:15.75px;"><span style="letter-spacing:0.069px">AAAA</span></span></div>
<div class="t" style="left:1454.5px;top:493.7px;line-height:20px;color:#10142a;"><span style="font-size:15.75px;"><span style="letter-spacing:0.077px">Type</span></span></div>
<div class="b" style="left:1493.9px;top:476.9px;width:388.9px;height:56.3px;border:2px solid #c2c6cc;border-radius:12px;overflow:hidden;"><div class="b" style="right:0;top:0;width:38.5px;height:100%;background:#e9edf2;border-left:1px solid #cdd1d7"></div></div>
<div class="t" style="left:1508px;top:494.8px;line-height:20px;color:#10142a;"><span style="font-size:15.75px;"><span style="margin:0 -0.45px">C</span></span></div>
<div class="t" style="left:639px;top:550.9px;line-height:20px;color:#10142a;"><span style="font-size:15.75px;"><span style="letter-spacing:0.555px">Expiry</span></span></div>
<div class="b" style="left:690.9px;top:533.9px;width:388.9px;height:56.3px;border:2px solid #c2c6cc;border-radius:12px;overflow:hidden;"><div class="b" style="right:0;top:0;width:38.5px;height:100%;background:#e9edf2;border-left:1px solid #cdd1d7"></div></div>
<div class="t" style="left:705px;top:551.8px;line-height:20px;color:#10142a;"><span style="font-size:15.75px;"><span style="letter-spacing:0.661px">2026-03-17</span></span></div>
<div class="t" style="left:1083.7px;top:550.9px;line-height:20px;color:#10142a;"><span style="font-size:15.75px;"><span style="letter-spacing:0.476px">Strike</span></span></div>
<div class="b" style="left:1131.9px;top:533.9px;width:388.9px;height:56.3px;border:2px solid #c2c6cc;border-radius:12px;overflow:hidden;"><div class="b" style="right:0;top:0;width:38.5px;height:100%;background:#e9edf2;border-left:1px solid #cdd1d7"></div></div>
<div class="t" style="left:1146px;top:551.8px;line-height:20px;color:#10142a;"><span style="font-size:15.75px;"><span style="letter-spacing:0.784px">90</span></span></div>
<div class="t" style="left:639px;top:607.9px;line-height:20px;color:#10142a;"><span style="font-size:15.75px;"><span style="letter-spacing:0.229px">Side</span></span></div>
<div class="b" style="left:675.9px;top:590.9px;width:388.9px;height:56.3px;border:2px solid #c2c6cc;border-radius:12px;overflow:hidden;"><div class="b" style="right:0;top:0;width:38.5px;height:100%;background:#e9edf2;border-left:1px solid #cdd1d7"></div></div>
<div class="t" style="left:690px;top:608.8px;line-height:20px;color:#10142a;"><span style="font-size:15.75px;"><span style="letter-spacing:-0.651px">BUY</span></span></div>
<div class="t" style="left:1068.7px;top:607.9px;line-height:20px;color:#10142a;"><span style="font-size:15.75px;"><span style="letter-spacing:0.688px">Qty</span></span></div>
<div class="b" style="left:1099.9px;top:590.9px;width:110.4px;height:56.3px;border:2px solid #c2c6cc;border-radius:12px;"></div>
<div class="t" style="left:1116.5px;top:608.8px;line-height:20px;color:#10142a;"><span style="font-size:15.75px;"><span style="margin:0 0.392px">1</span></span></div>
<div class="b" style="left:1197.5px;top:594px;width:11.5px;height:49.5px;background:#f7fafd;"></div>
<div class="b" style="left:1209.1px;top:593.7px;width:1.4px;height:49.9px;background:#565a60;"></div>
<div class="b" style="left:1196.6px;top:617.3px;width:13.4px;height:1.4px;background:#565a60;"></div>
<div class="b" style="left:1196.6px;top:642.2px;width:13.4px;height:1.4px;background:#565a60;"></div>
<div class="b" style="left:1698.9px;top:591px;width:183.9px;height:54.2px;border:2px solid #d2d6db;border-radius:12px;"></div>
<div class="t" style="left:1717.57px;top:608.1px;line-height:20px;color:#0b0f1f;"><span style="font-size:15.75px;font-weight:700;-webkit-text-stroke:0.33px;"><span style="letter-spacing:1.273px">EXECUTE </span><span style="letter-spacing:1.687px">CHAIN</span></span></div>
<div class="t" style="left:639px;top:646.7px;line-height:20px;color:#6b7280;"><span style="font-size:15.75px;"><span style="letter-spacing:0.277px">AAAA_2026-03-17_C90  </span><span style="letter-spacing:0.613px">Underlying </span><span style="letter-spacing:0.18px">AAAA: </span><span style="letter-spacing:0.637px">373.73  </span><span style="letter-spacing:0.534px">Premium: </span><span style="letter-spacing:0.672px">293.99 </span><span style="letter-spacing:1.156px">(×100)</span></span></div>
<div class="b" style="left:632.3px;top:674.2px;width:1257.4px;height:330.8px;border:1px solid #d5dae0;border-radius:12px;"></div>
<div class="t" style="left:639px;top:677.6px;line-height:20px;color:#10142a;"><span style="font-size:15.75px;"><span style="letter-spacing:0.637px">Derivatives </span><span style="letter-spacing:0.117px">Tape</span></span></div>
<div class="b" style="left:639.4px;top:700px;width:1243.1px;height:300.5px;border:1px solid #d5dae0;border-radius:11px;"></div>
<div class="b" style="left:654px;top:714.8px;width:5.3px;height:15.7px;border:1px solid #f8d548;"></div>
<div class="t" style="left:663.5px;top:714.4px;line-height:16px;color:#fcd013;"><span style="font-size:12.6px;font-weight:700;-webkit-text-stroke:0.26px;"><span style="letter-spacing:0.707px">Options </span><span style="letter-spacing:1.021px">&amp; </span><span style="letter-spacing:0.762px">Futures </span><span style="letter-spacing:0.687px">Guide: </span><span style="letter-spacing:0.54px">Call </span><span style="letter-spacing:0.761px">(C)</span></span><span style="font-size:12.6px;"><span style="letter-spacing:0.314px"> </span><span style="letter-spacing:1.505px">= </span><span style="letter-spacing:0.666px">right </span><span style="letter-spacing:0.618px">to </span><span style="letter-spacing:-0.255px">BUY </span><span style="letter-spacing:0.621px">at </span><span style="letter-spacing:0.477px">strike </span><span style="letter-spacing:0.478px">price </span><span style="letter-spacing:0.585px">(profit </span><span style="letter-spacing:0.52px">when </span><span style="letter-spacing:0.478px">price </span><span style="letter-spacing:0.333px">rises). </span></span><span style="font-size:12.6px;font-weight:700;-webkit-text-stroke:0.26px;"><span style="letter-spacing:0.864px">Put </span><span style="letter-spacing:0.989px">(P)</span></span><span style="font-size:12.6px;"><span style="letter-spacing:0.314px"> </span><span style="letter-spacing:1.505px">= </span><span style="letter-spacing:0.666px">right </span><span style="letter-spacing:0.618px">to </span><span style="letter-spacing:-0.294px">SELL </span><span style="letter-spacing:0.621px">at </span><span style="letter-spacing:0.477px">strike </span><span style="letter-spacing:0.478px">price </span><span style="letter-spacing:0.585px">(profit </span><span style="letter-spacing:0.52px">when </span><span style="letter-spacing:0.478px">price </span><span style="letter-spacing:0.401px">falls). </span><span style="letter-spacing:0.147px">Each </span><span style="letter-spacing:0.593px">contract </span><span style="letter-spacing:1.505px">= </span><span style="letter-spacing:0.549px">100 </span><span style="letter-spacing:0.291px">shares, </span><span style="letter-spacing:0.2px">so </span><span style="letter-spacing:0.711px">premium</span></span></div>
<div class="t" style="left:654px;top:728.5px;line-height:16px;color:#fcd013;"><span style="font-size:12.6px;"><span style="letter-spacing:1.505px">× </span><span style="letter-spacing:0.549px">100 </span><span style="letter-spacing:1.505px">= </span><span style="letter-spacing:0.52px">actual </span><span style="letter-spacing:0.403px">cost. </span><span style="letter-spacing:0.469px">Buying </span><span style="letter-spacing:1.505px">= </span><span style="letter-spacing:0.663px">limited </span><span style="letter-spacing:0.437px">risk </span><span style="letter-spacing:0.333px">(lose </span><span style="letter-spacing:0.516px">only </span><span style="letter-spacing:0.609px">premium). </span><span style="letter-spacing:0.339px">Selling </span><span style="letter-spacing:1.505px">= </span><span style="letter-spacing:0.538px">higher </span><span style="letter-spacing:0.437px">risk.</span></span></div>
<div class="b" style="left:654px;top:748.8px;width:5.3px;height:15.7px;border:1px solid #f8d548;"></div>
<div class="t" style="left:663.5px;top:747.6px;line-height:16px;color:#fcd013;"><span style="font-size:12.6px;font-weight:700;-webkit-text-stroke:0.26px;"><span style="letter-spacing:0.838px">Strike </span><span style="letter-spacing:0.643px">Price:</span></span><span style="font-size:12.6px;"><span style="letter-spacing:0.314px"> </span><span style="letter-spacing:0.23px">The </span><span style="letter-spacing:0.477px">strike </span><span style="letter-spacing:0.267px">is </span><span style="letter-spacing:0.623px">the </span></span><span style="font-size:12.6px;font-style:italic;"><span style="letter-spacing:0.438px">locked-in </span><span style="letter-spacing:0.511px">price</span></span><span style="font-size:12.6px;"><span style="letter-spacing:0.314px"> </span><span style="letter-spacing:0.475px">where </span><span style="letter-spacing:0.557px">your </span><span style="letter-spacing:0.561px">option </span><span style="letter-spacing:0.476px">lets </span><span style="letter-spacing:0.512px">you </span><span style="letter-spacing:0.581px">buy </span><span style="letter-spacing:0.462px">or </span><span style="letter-spacing:0.337px">sell. </span><span style="letter-spacing:0.433px">Example: </span><span style="letter-spacing:0.407px">A </span></span><span style="font-size:12.6px;font-weight:700;-webkit-text-stroke:0.26px;"><span style="letter-spacing:0.54px">Call </span><span style="letter-spacing:0.992px">with </span><span style="letter-spacing:0.823px">strike </span><span style="letter-spacing:1.342px">$50</span></span><span style="font-size:12.6px;"><span style="letter-spacing:0.314px"> </span><span style="letter-spacing:0.476px">lets </span><span style="letter-spacing:0.512px">you </span><span style="letter-spacing:0.581px">buy </span><span style="letter-spacing:0.287px">shares </span><span style="letter-spacing:0.621px">at </span><span style="letter-spacing:0.549px">$50 </span><span style="letter-spacing:0.415px">no </span><span style="letter-spacing:0.768px">matter </span><span style="letter-spacing:0.49px">how </span><span style="letter-spacing:0.531px">high </span><span style="letter-spacing:0.623px">the </span><span style="letter-spacing:0.627px">market </span><span style="letter-spacing:0.317px">goes </span><span style="letter-spacing:-0.143px">— </span><span style="letter-spacing:0.524px">if </span><span style="letter-spacing:0.623px">the </span><span style="letter-spacing:0.488px">stock</span></span></div>
<div class="t" style="left:654px;top:763px;line-height:16px;color:#fcd013;"><span style="font-size:12.6px;"><span style="letter-spacing:0.521px">hits </span><span style="letter-spacing:0.502px">$70, </span><span style="letter-spacing:0.512px">you </span><span style="letter-spacing:0.599px">profit </span><span style="letter-spacing:0.436px">$20/share. </span><span style="letter-spacing:0.407px">A </span></span><span style="font-size:12.6px;font-weight:700;-webkit-text-stroke:0.26px;"><span style="letter-spacing:0.864px">Put </span><span style="letter-spacing:0.992px">with </span><span style="letter-spacing:0.823px">strike </span><span style="letter-spacing:1.342px">$50</span></span><span style="font-size:12.6px;"><span style="letter-spacing:0.314px"> </span><span style="letter-spacing:0.476px">lets </span><span style="letter-spacing:0.512px">you </span><span style="letter-spacing:0.342px">sell </span><span style="letter-spacing:0.621px">at </span><span style="letter-spacing:0.549px">$50 </span><span style="letter-spacing:0.493px">even </span><span style="letter-spacing:0.524px">if </span><span style="letter-spacing:0.623px">the </span><span style="letter-spacing:0.459px">stock </span><span style="letter-spacing:0.322px">crashes </span><span style="letter-spacing:0.618px">to </span><span style="letter-spacing:0.549px">$30 </span><span style="letter-spacing:-0.143px">— </span><span style="letter-spacing:0.512px">you </span><span style="letter-spacing:0.599px">profit </span><span style="letter-spacing:0.436px">$20/share. </span></span><span style="font-size:12.6px;font-weight:700;-webkit-text-stroke:0.26px;"><span style="letter-spacing:0.94px">In-the-money </span><span style="letter-spacing:1.095px">(ITM)</span></span><span style="font-size:12.6px;"><span style="letter-spacing:0.314px"> </span><span style="letter-spacing:1.505px">= </span><span style="letter-spacing:0.477px">strike </span><span style="letter-spacing:0.267px">is </span><span style="letter-spacing:0.475px">already </span><span style="letter-spacing:0.551px">profitable </span><span style="letter-spacing:0.291px">(Call: </span><span style="letter-spacing:0.477px">strike </span><span style="margin:0 1.348px">&lt;</span></span></div>
<div class="t" style="left:654px;top:776.4px;line-height:16px;color:#fcd013;"><span style="font-size:12.6px;"><span style="letter-spacing:0.627px">market </span><span style="letter-spacing:0.487px">price; </span><span style="letter-spacing:0.256px">Put: </span><span style="letter-spacing:0.477px">strike </span><span style="letter-spacing:1.505px">&gt; </span><span style="letter-spacing:0.627px">market </span><span style="letter-spacing:0.459px">price). </span></span><span style="font-size:12.6px;font-weight:700;-webkit-text-stroke:0.26px;"><span style="letter-spacing:0.902px">Out-of-the-money </span><span style="letter-spacing:0.982px">(OTM)</span></span><span style="font-size:12.6px;"><span style="letter-spacing:0.314px"> </span><span style="letter-spacing:1.505px">= </span><span style="letter-spacing:0.477px">strike </span><span style="letter-spacing:0.267px">is </span><span style="letter-spacing:0.613px">not </span><span style="letter-spacing:0.674px">yet </span><span style="letter-spacing:0.531px">profitable. </span><span style="letter-spacing:0.324px">Lower </span><span style="letter-spacing:0.411px">strikes </span><span style="letter-spacing:0.415px">on </span><span style="letter-spacing:0.16px">Calls </span><span style="letter-spacing:0.377px">are </span><span style="letter-spacing:0.538px">more </span><span style="letter-spacing:0.453px">expensive </span><span style="letter-spacing:0.379px">(closer </span><span style="letter-spacing:0.618px">to </span><span style="letter-spacing:0.556px">guaranteed </span><span style="letter-spacing:0.555px">profit). </span><span style="letter-spacing:0.442px">Higher </span><span style="letter-spacing:0.411px">strikes </span><span style="letter-spacing:0.415px">on </span><span style="letter-spacing:0.138px">Puts </span><span style="letter-spacing:0.398px">are</span></span></div>
<div class="t" style="left:654px;top:789.7px;line-height:16px;color:#fcd013;"><span style="font-size:12.6px;"><span style="letter-spacing:0.538px">more </span><span style="letter-spacing:0.453px">expensive </span><span style="letter-spacing:0.527px">for </span><span style="letter-spacing:0.623px">the </span><span style="letter-spacing:0.436px">same </span><span style="letter-spacing:0.338px">reason. </span><span style="letter-spacing:0.23px">The </span></span><span style="font-size:12.6px;font-weight:700;-webkit-text-stroke:0.26px;"><span style="letter-spacing:0.644px">Expiry</span></span><span style="font-size:12.6px;"><span style="letter-spacing:0.314px"> </span><span style="letter-spacing:0.57px">date </span><span style="letter-spacing:0.267px">is </span><span style="letter-spacing:0.52px">when </span><span style="letter-spacing:0.623px">the </span><span style="letter-spacing:0.561px">option </span><span style="letter-spacing:0.403px">expires </span><span style="letter-spacing:0.472px">worthless </span><span style="letter-spacing:0.524px">if </span><span style="letter-spacing:0.613px">not </span><span style="letter-spacing:0.551px">profitable.</span></span></div>
<div class="b" style="left:1858px;top:711px;width:14px;height:279px;background:#f8fafd;"></div>
<div class="b" style="left:1858px;top:711px;width:14px;height:14px;background:#f7fafd;box-shadow:inset -1.5px -1.5px 0 #8a8c90, inset 1px 1px 0 #ffffff;"></div>
<svg class="b" style="left:1858.5px;top:711.5px" width="12" height="12"><polygon points="3.8,7.1 8.2,7.1 6,4.4" fill="#5a5d63"/></svg>
<div class="b" style="left:1858px;top:976px;width:14px;height:14px;background:#f7fafd;box-shadow:inset -1.5px -1.5px 0 #8a8c90, inset 1px 1px 0 #ffffff;"></div>
<svg class="b" style="left:1858.5px;top:977px" width="12" height="12"><polygon points="3.8,4.9 8.2,4.9 6,7.6" fill="#5a5d63"/></svg>
<div class="b" style="left:29px;top:1029px;width:1862px;height:32px;overflow:hidden;"><div class="b" style="left:-29px;top:-1029px;width:1920px;height:1080px;">
<div class="t" style="left:26.8px;top:1033.6px;line-height:20px;color:#dfe4ed;"><span style="font-size:13.65px;"><span style="letter-spacing:1.336px">Now </span><span style="letter-spacing:1.375px">Playing: </span><span style="letter-spacing:1.29px">War </span><span style="letter-spacing:1.315px">Chest  </span></span><svg style="display:inline-block;vertical-align:baseline;overflow:visible;margin-right:1px" width="11.65" height="12.06" viewBox="0 -1900 1836 1900"><path fill="currentColor" transform="scale(1,-1)" d="M133 912H732L918 1481L1105 912H1703L1219 559L1405 -9L918 343L432 -9L617 559Z"/></svg><span style="font-size:13.65px;"><span style="letter-spacing:1.34px">  </span></span><svg style="display:inline-block;vertical-align:baseline;overflow:visible;margin-right:1px" width="9.13" height="12.06" viewBox="0 -1900 1438 1900"><path fill="currentColor" transform="scale(1,-1)" d="M1233 1496H1247L1268 1475V1468L642 926Q642 855 733 855Q1120 772 1120 758L1127 687L184 4L170 25V32Q817 631 817 644Q817 715 698 715Q333 789 317 806L310 877Z"/></svg><span style="font-size:13.65px;"><span style="letter-spacing:1.34px"> </span><span style="letter-spacing:1.211px">Safe </span><span style="letter-spacing:1.426px">Haven </span><span style="letter-spacing:1.348px">Bid </span><span style="letter-spacing:2.118px">#21: </span><span style="letter-spacing:1.211px">Safe </span><span style="letter-spacing:1.426px">Haven </span><span style="letter-spacing:1.348px">Bid </span><span style="letter-spacing:1.564px">hits </span><span style="letter-spacing:1.675px">the </span><span style="letter-spacing:1.571px">tape. </span><span style="letter-spacing:1.692px">(8h17m </span><span style="letter-spacing:1.579px">left)  </span></span><svg style="display:inline-block;vertical-align:baseline;overflow:visible;margin-right:1px" width="11.65" height="12.06" viewBox="0 -1900 1836 1900"><path fill="currentColor" transform="scale(1,-1)" d="M133 912H732L918 1481L1105 912H1703L1219 559L1405 -9L918 343L432 -9L617 559Z"/></svg><span style="font-size:13.65px;"><span style="letter-spacing:1.34px">  </span></span><svg style="display:inline-block;vertical-align:baseline;overflow:visible;margin-right:1px" width="9.13" height="12.06" viewBox="0 -1900 1438 1900"><path fill="currentColor" transform="scale(1,-1)" d="M1233 1496H1247L1268 1475V1468L642 926Q642 855 733 855Q1120 772 1120 758L1127 687L184 4L170 25V32Q817 631 817 644Q817 715 698 715Q333 789 317 806L310 877Z"/></svg><span style="font-size:13.65px;"><span style="letter-spacing:1.34px"> </span><span style="letter-spacing:1.415px">Supply </span><span style="letter-spacing:1.283px">Rumors </span><span style="letter-spacing:2.118px">#17: </span><span style="letter-spacing:1.415px">Supply </span><span style="letter-spacing:1.283px">Rumors </span><span style="letter-spacing:1.564px">hits </span><span style="letter-spacing:1.675px">the </span><span style="letter-spacing:1.571px">tape. </span><span style="letter-spacing:1.692px">(5h23m </span><span style="letter-spacing:1.579px">left)  </span></span><svg style="display:inline-block;vertical-align:baseline;overflow:visible;margin-right:1px" width="11.65" height="12.06" viewBox="0 -1900 1836 1900"><path fill="currentColor" transform="scale(1,-1)" d="M133 912H732L918 1481L1105 912H1703L1219 559L1405 -9L918 343L432 -9L617 559Z"/></svg><span style="font-size:13.65px;"><span style="letter-spacing:1.34px">  </span></span><svg style="display:inline-block;vertical-align:baseline;overflow:visible;margin-right:1px" width="9.13" height="12.06" viewBox="0 -1900 1438 1900"><path fill="currentColor" transform="scale(1,-1)" d="M1233 1496H1247L1268 1475V1468L642 926Q642 855 733 855Q1120 772 1120 758L1127 687L184 4L170 25V32Q817 631 817 644Q817 715 698 715Q333 789 317 806L310 877Z"/></svg><span style="font-size:13.65px;"><span style="letter-spacing:1.34px"> </span><span style="letter-spacing:1.211px">Safe </span><span style="letter-spacing:1.426px">Haven </span><span style="letter-spacing:1.348px">Bid </span><span style="letter-spacing:2.118px">#85: </span><span style="letter-spacing:1.211px">Safe </span><span style="letter-spacing:1.426px">Haven </span><span style="letter-spacing:1.348px">Bid </span><span style="letter-spacing:1.564px">hits </span><span style="letter-spacing:1.675px">the </span><span style="letter-spacing:1.571px">tape. </span><span style="letter-spacing:1.692px">(4h00m </span><span style="letter-spacing:1.579px">left)  </span></span><svg style="display:inline-block;vertical-align:baseline;overflow:visible;margin-right:1px" width="11.65" height="12.06" viewBox="0 -1900 1836 1900"><path fill="currentColor" transform="scale(1,-1)" d="M133 912H732L918 1481L1105 912H1703L1219 559L1405 -9L918 343L432 -9L617 559Z"/></svg><span style="font-size:13.65px;"><span style="letter-spacing:1.34px">  </span><span style="letter-spacing:1.878px">♫ </span><span style="letter-spacing:1.336px">Now </span><span style="letter-spacing:1.375px">Playing: </span><span style="letter-spacing:1.29px">War </span><span style="letter-spacing:1.305px">Chest</span></span></div>
</div></div>
</body></html>
